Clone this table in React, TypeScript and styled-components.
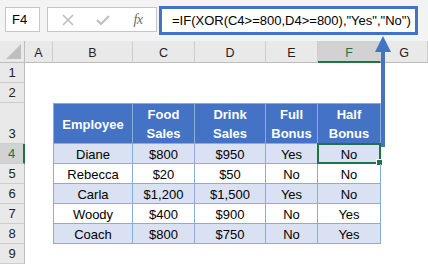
import styled, { createGlobalStyle, css } from "styled-components";

const GlobalStyle = createGlobalStyle`
  body {
    margin: 0;
    background: #ffffff;
    font-family: "Liberation Sans", Arial, sans-serif;
  }
`;

const Page = styled.div`
  position: relative;
  width: 428px;
  height: 264px;
  overflow: hidden;
  background: #ffffff;
`;

const FormulaBar = styled.div`
  display: flex;
  align-items: flex-start;
  height: 41px;
  box-sizing: border-box;
  padding: 6px 10px 0 5px;
  background: #f3f3f3;
`;

const NameBox = styled.div`
  width: 35px;
  height: 25px;
  margin-top: 1px;
  box-sizing: border-box;
  border: 1px solid #c6c6c6;
  background: #ffffff;
  font-size: 13px;
  line-height: 23px;
  padding-left: 6px;
  color: #000;
`;

const IconStrip = styled.div`
  display: flex;
  align-items: center;
  gap: 11px;
  width: 110px;
  height: 25px;
  margin: 1px 2px 0 7px;
  box-sizing: border-box;
  padding-left: 8px;
  border: 1px solid #c6c6c6;
  background: #ffffff;
`;

const IconSlot = styled.span`
  display: flex;
  justify-content: center;
  align-items: center;
  width: 24px;
  height: 23px;
`;

const FxLabel = styled.span`
  font-family: "Liberation Serif", "Times New Roman", serif;
  font-style: italic;
  font-size: 14px;
  color: #6a6a6a;
  letter-spacing: -0.5px;
`;

const FormulaInput = styled.div`
  flex: 1;
  height: 29px;
  box-sizing: border-box;
  border: 3px solid #4472c4;
  background: #ffffff;
  font-size: 13px;
  line-height: 23px;
  padding-left: 10px;
  color: #000;
  white-space: nowrap;
`;

const Sheet = styled.div`
  display: grid;
  grid-template-columns: 25px 28px 80px 62px 71px 52px 63px 47px;
  grid-template-rows: 22px 20px 20px 41px repeat(6, 20px);
`;

const Corner = styled.div`
  position: relative;
  background: #e9e9e9;
  box-sizing: border-box;
  border-right: 1px solid #bdbdbd;
  border-bottom: 1px solid #bdbdbd;

  &::after {
    content: "";
    position: absolute;
    right: 3px;
    bottom: 3px;
    width: 0;
    height: 0;
    border-left: 15px solid transparent;
    border-bottom: 15px solid #bfbfbf;
  }
`;

const ColHeader = styled.div<{ $active?: boolean }>`
  display: flex;
  justify-content: center;
  align-items: center;
  padding-top: 3px;
  box-sizing: border-box;
  background: #e9e9e9;
  border-right: 1px solid #cdcdcd;
  border-bottom: 1px solid #bdbdbd;
  font-size: 12.5px;
  color: #222;
  ${(p) =>
    p.$active &&
    css`
      background: #d2d2d2;
      color: #217346;
      border-bottom: 2px solid #217346;
    `}
`;

const RowHeader = styled.div<{ $active?: boolean }>`
  display: flex;
  justify-content: center;
  align-items: flex-end;
  padding-bottom: 2px;
  box-sizing: border-box;
  background: #e9e9e9;
  border-right: 1px solid #bdbdbd;
  border-bottom: 1px solid #cdcdcd;
  font-size: 13px;
  line-height: 15px;
  color: #222;
  ${(p) =>
    p.$active &&
    css`
      background: #d2d2d2;
      color: #217346;
      border-right: 2px solid #217346;
    `}
`;

type CellKind = "blank" | "head" | "band" | "plain";

const Cell = styled.div<{ $kind: CellKind; $first?: boolean; $top?: boolean }>`
  position: relative;
  display: flex;
  justify-content: center;
  align-items: center;
  box-sizing: border-box;
  padding-top: 1px;
  font-size: 13px;
  line-height: 19px;
  color: #000;
  text-align: center;
  white-space: pre-line;
  ${(p) =>
    p.$kind !== "blank" &&
    css`
      border-right: 1px solid #8ea9db;
      border-bottom: 1px solid #8ea9db;
    `}
  ${(p) => p.$first && "border-left: 1px solid #8ea9db;"}
  ${(p) => p.$top && "border-top: 1px solid #8ea9db;"}
  ${(p) =>
    p.$kind === "head" &&
    css`
      background: #4472c4;
      color: #ffffff;
      font-weight: bold;
    `}
  ${(p) => p.$kind === "band" && "background: #d9e1f2;"}
`;

const Selection = styled.div`
  position: absolute;
  inset: -1px -1px -1px -1px;
  border: 2px solid #217346;
  pointer-events: none;

  &::after {
    content: "";
    position: absolute;
    right: -4px;
    bottom: -4px;
    width: 5px;
    height: 5px;
    background: #217346;
    border: 1px solid #ffffff;
  }
`;

const Arrow = styled.svg`
  position: absolute;
  left: 375px;
  top: 36px;
`;

const columns = ["A", "B", "C", "D", "E", "F", "G"];

const tableHead = ["Employee", "Food\nSales", "Drink\nSales", "Full\nBonus", "Half\nBonus"];

const tableRows = [
  ["Diane", "$800", "$950", "Yes", "No"],
  ["Rebecca", "$20", "$50", "No", "No"],
  ["Carla", "$1,200", "$1,500", "Yes", "No"],
  ["Woody", "$400", "$900", "No", "Yes"],
  ["Coach", "$800", "$750", "No", "Yes"],
];

function SheetRow({ row }: { row: number }) {
  const active = row === 4;
  let cells: React.ReactNode[];
  if (row < 3 || row > 8) {
    cells = columns.map((c) => <Cell key={c} $kind="blank" />);
  } else {
    const values = row === 3 ? tableHead : tableRows[row - 4];
    const kind: CellKind = row === 3 ? "head" : row % 2 === 0 ? "band" : "plain";
    cells = [
      <Cell key="A" $kind="blank" />,
      ...values.map((v, i) => (
        <Cell key={i} $kind={kind} $first={i === 0} $top={row === 3}>
          {v}
          {row === 4 && i === 4 ? <Selection /> : null}
        </Cell>
      )),
      <Cell key="G" $kind="blank" />,
    ];
  }
  return (
    <>
      <RowHeader $active={active}>{row}</RowHeader>
      {cells}
    </>
  );
}

export default function App() {
  return (
    <Page>
      <GlobalStyle />
      <FormulaBar>
        <NameBox>F4</NameBox>
        <IconStrip>
          <IconSlot>
            <svg width="12" height="12" viewBox="0 0 12 12">
              <path d="M1 1 L11 11 M11 1 L1 11" stroke="#bdbdbd" strokeWidth="1.6" fill="none" />
            </svg>
          </IconSlot>
          <IconSlot>
            <svg width="14" height="12" viewBox="0 0 14 12">
              <path d="M1 6 L5 10 L13 2" stroke="#bdbdbd" strokeWidth="2" fill="none" />
            </svg>
          </IconSlot>
          <IconSlot>
            <FxLabel>fx</FxLabel>
          </IconSlot>
        </IconStrip>
        <FormulaInput>=IF(XOR(C4&gt;=800,D4&gt;=800),"Yes","No")</FormulaInput>
      </FormulaBar>
      <Sheet>
        <Corner />
        {columns.map((c) => (
          <ColHeader key={c} $active={c === "F"}>
            {c}
          </ColHeader>
        ))}
        {[1, 2, 3, 4, 5, 6, 7, 8, 9].map((r) => (
          <SheetRow key={r} row={r} />
        ))}
      </Sheet>
      <Arrow width="16" height="112" viewBox="0 0 16 112">
        <polygon points="8,0 16,16 0,16" fill="#4472c4" />
        <rect x="6" y="15" width="4" height="96" fill="#4472c4" />
      </Arrow>
    </Page>
  );
}
